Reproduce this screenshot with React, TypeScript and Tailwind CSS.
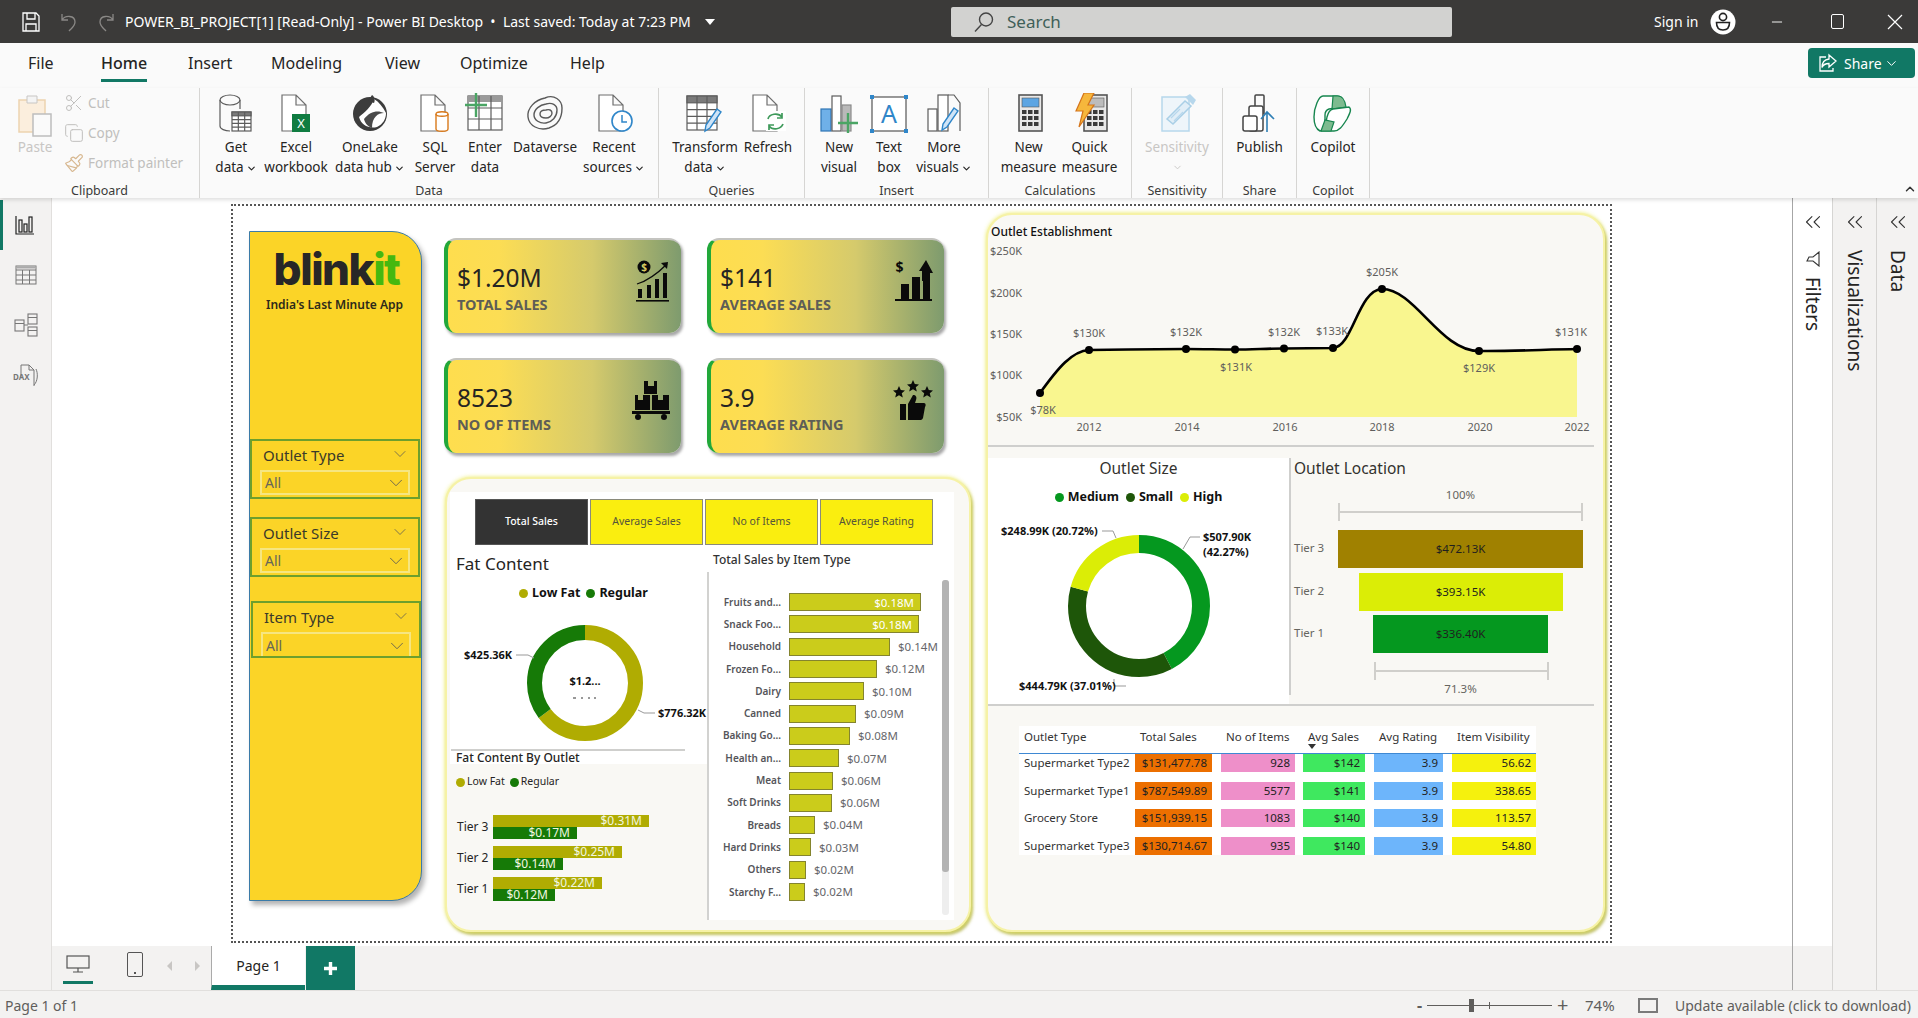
import React from 'react';
import { ChevronDown, ChevronUp, ChevronsLeft, Scissors, Copy, Paintbrush, Minus } from 'lucide-react';

// ---- title bar icons
const SaveIcon = () => (
  <svg width="18" height="20" viewBox="0 0 18 20" fill="none" stroke="#fff" strokeWidth="1.3">
    <path d="M1 1h13l3 3v15H1z" /><path d="M5 1v6h8V1M4 19v-7h10v7" />
  </svg>
);
const UndoIcon = ({ flip }: { flip?: boolean }) => (
  <svg width="18" height="20" viewBox="0 0 18 20" fill="none" stroke="#8a8886" strokeWidth="1.3" className={flip ? '-scale-x-100' : ''}>
    <path d="M2 2v6h6M2 8c3-5 13-5 13 2 0 4-3 6-6 9" />
  </svg>
);
const Avatar = () => (
  <svg width="26" height="26" viewBox="0 0 26 26">
    <circle cx="13" cy="13" r="12.5" fill="#fff" />
    <circle cx="13" cy="8" r="3.6" fill="none" stroke="#222" strokeWidth="1.6" />
    <path d="M6.5 13.5h13c0 5-2.5 7.5-6.5 7.5s-6.500-2.500-6.500-7.500z" fill="none" stroke="#222" strokeWidth="1.6" />
  </svg>
);

// ---- ribbon icons, all 40x40
const I = ({ children }: { children: React.ReactNode }) => (
  <svg width="40" height="40" viewBox="0 0 40 40" fill="none" stroke="#5c5c5c" strokeWidth="1.2">{children}</svg>
);
const Doc = ({ x = 8, w = 24 }: { x?: number; w?: number }) => (
  <path d={`M${x} 2h${w - 10}l10 10v26h-${w}z M${x + w - 10} 2v10h10`} stroke="#6e6e6e" fill="#fff" />
);
const MiniTable = ({ x, y, w, h }: { x: number; y: number; w: number; h: number }) => (
  <g stroke="#5c5c5c">
    <rect x={x} y={y} width={w} height={h} fill="#fff" />
    <rect x={x} y={y} width={w} height={h / 5} fill="#7a7a7a" />
    <path d={`M${x + w / 3} ${y}v${h}M${x + (2 * w) / 3} ${y}v${h}M${x} ${y + (2 * h) / 5}h${w}M${x} ${y + (3 * h) / 5}h${w}M${x} ${y + (4 * h) / 5}h${w}`} />
  </g>
);
const Pencil = ({ x, y }: { x: number; y: number }) => (
  <g transform={`translate(${x} ${y})`}>
    <path d="M12 0l4 3L5 19l-5 3 1-6z" fill="#cfe4f7" stroke="#2f86c9" strokeWidth="1.4" />
  </g>
);

const GetData = () => (
  <I><ellipse cx="14" cy="7" rx="10" ry="5" /><path d="M4 7v26c0 3 5 5 10 5" /><path d="M24 7v9" /><MiniTable x={16} y={19} w={19} h={19} /></I>
);
const Excel = () => (
  <I><Doc x={6} w={24} /><rect x="16" y="21" width="18" height="18" fill="#107c41" stroke="none" /><text x="25" y="35" textAnchor="middle" fontSize="13" fill="#fff" stroke="none">X</text></I>
);
const OneLake = () => (
  <I>
    <circle cx="20" cy="21" r="17" fill="#3c3c3c" stroke="none" />
    <path d="M24 6c-2 7-10 14-15 18 2 8 10 12 18 10 6-3 9-8 9-14-3-6-7-11-12-14z" fill="#fff" stroke="none" />
    <path d="M14 26c6-8 14-9 20-6-6 0-12 4-12 15-5-2-7-5-8-9z" fill="#4a4a4a" stroke="none" />
    <path d="M22 2c3 2 3 6 2 8l-6-2z" fill="#3c3c3c" stroke="none" />
  </I>
);
const Sql = () => (
  <I><Doc x={6} w={24} /><path d="M21 21c0-3 12-3 12 0v15c0 3-12 3-12 0z" fill="#fff" stroke="#d97a1c" strokeWidth="1.4" /><path d="M21 21c0 3 12 3 12 0" stroke="#d97a1c" strokeWidth="1.4" /></I>
);
const EnterData = () => (
  <I><rect x="3" y="3" width="34" height="34" fill="#fff" /><rect x="3" y="3" width="34" height="6" fill="#9a9a9a" stroke="none" /><path d="M14 3v34M26 3v34M3 15h34M3 26h34" /><path d="M11 0v24M0 12h22" stroke="#4aa564" strokeWidth="2.4" /></I>
);
const Dataverse = () => (
  <I><g stroke="#5a5a5a" strokeWidth="1.4"><path d="M20 5c9-4 17 2 17 10 0 9-4 17-13 20C14 38 4 33 3 24 2 15 10 7 20 5z" /><path d="M21 11c6-2 11 1 11 6 0 7-5 12-11 13-6 1-12-3-12-8 0-6 6-10 12-11z" /><path d="M21 17c3-1 6 0 6 3 0 3-3 5-6 5s-6-1-6-4 3-4 6-4z" /></g></I>
);
const Recent = () => (
  <I><Doc x={5} w={24} /><circle cx="28" cy="28" r="10" fill="#fff" stroke="#2f86c9" strokeWidth="1.6" /><path d="M28 22v7h5" stroke="#2f86c9" strokeWidth="1.5" /></I>
);
const Transform = () => (
  <I><MiniTable x={2} y={3} w={30} h={34} /><Pencil x={20} y={16} /></I>
);
const Refresh = () => (
  <I><Doc x={5} w={24} /><rect x="18" y="18" width="20" height="20" fill="#fff" stroke="none" /><path d="M20 26c1-5 10-7 14-2M34 20v5h-5M35 31c-2 5-10 7-14 2M21 37v-5h5" stroke="#3f9a5b" strokeWidth="1.7" /></I>
);
const NewVisual = () => (
  <I><rect x="2" y="16" width="10" height="22" fill="#6fb0e8" stroke="#2f76b5" /><rect x="13" y="3" width="9" height="35" fill="#fff" /><rect x="23" y="12" width="9" height="26" fill="#b9b9b9" stroke="#8a8a8a" /><path d="M29 20v20M19 30h20" stroke="#4aa564" strokeWidth="2.400" /></I>
);
const TextBox = () => (
  <I><rect x="3" y="4" width="34" height="34" fill="#fff" stroke="#555" /><g fill="#2f86c9" stroke="none"><rect x="1" y="2" width="4" height="4" /><rect x="35" y="2" width="4" height="4" /><rect x="1" y="36" width="4" height="4" /><rect x="35" y="36" width="4" height="4" /></g><text x="20" y="30" textAnchor="middle" fontSize="25" fill="#2f86c9" stroke="none">A</text></I>
);
const MoreVisuals = () => (
  <I><rect x="4" y="16" width="9" height="22" fill="#fff" /><rect x="14" y="2" width="10" height="36" fill="#fff" /><path d="M24 2h6l6 8v28" /><Pencil x={18} y={15} /></I>
);
const Calc = ({ top, x = 10 }: { top: string; x?: number }) => (
  <g transform={`translate(${x} 2)`}>
    <rect x="0" y="0" width="23" height="36" fill="#e8e8e8" stroke="#555" strokeWidth="1.6" />
    <rect x="3" y="3" width="17" height="9" fill={top} stroke="#555" strokeWidth="0.6" />
    {[14, 20, 26].map(yy => [3, 9, 15].map(xx => <rect key={`${xx}-${yy}`} x={xx} y={yy + 1} width="4.500" height="4" fill="#3a3a3a" stroke="none" />))}
  </g>
);
const NewMeasure = () => (<I><Calc top="#5ca5e3" /></I>);
const QuickMeasure = () => (
  <I><Calc top="#bcbcbc" x={14} /><path d="M14 0h10l-6 12h6L9 34l4-16H6z" fill="#f6b73c" stroke="#d4741b" strokeWidth="1.2" /></I>
);
const SensitivityIcon = () => (
  <I><rect x="5" y="4" width="27" height="34" fill="#eef5fa" stroke="#b7d7ec" strokeWidth="1.5" /><path d="M10 26L28 8l6 5-18 18z" fill="#e1eef7" stroke="#a9cfe6" strokeWidth="1.500" /><path d="M28 4l5-3 6 6-3 5z" fill="#b7d7ec" stroke="none" /><path d="M14 25l9-9M17 28l9-9" stroke="#b7d7ec" /></I>
);
const Publish = () => (
  <I><path d="M15 14V3c0-1 1-1 1-1h7c1 0 1 1 1 1v18" stroke="#444" strokeWidth="1.500" /><rect x="9" y="13" width="14" height="25" rx="2" fill="#fff" stroke="#444" strokeWidth="1.500" /><rect x="3" y="23" width="14" height="15" rx="2" fill="#fff" stroke="#444" strokeWidth="1.500" /><path d="M27 39V20M21 26l6-7 7 7" stroke="#2f7fb5" strokeWidth="1.600" /></I>
);
const Copilot = () => (
  <I>
    <path d="M10 3h14c4 0 6 2 6 7v4l-14 2c-3 1-4 3-4 6v8c0 3-2 8-5 8C3 36 1 30 1 24 1 14 6 3 10 3z" fill="#fff" stroke="#17864f" strokeWidth="1.4" />
    <path d="M20 3h5c4 0 7 4 8 11l-14 2z" fill="#7dbb8f" stroke="#17864f" />
    <path d="M8 38h13c5 0 8-4 13-12 3-6 5-10 2-12l-16 2c-4 1-5 4-6 8-1 6-2 12-6 14z" fill="#fff" stroke="#17864f" strokeWidth="1.400" />
    <path d="M8 38h10l3-9-9-2z" fill="#7dbb8f" stroke="#17864f" />
  </I>
);

const RibbonBtn = ({ w, icon, l1, l2, caret, muted }: { w: string; icon?: React.ReactNode; l1: string; l2?: string; caret?: boolean; muted?: boolean }) => (
  <div className={`${w} shrink-0 flex flex-col items-center ${muted ? 'text-[#c8c6c4]' : 'text-[#252423]'}`}>
    <div className="h-[49px] pt-[5px] flex justify-center">{icon}</div>
    <div className="h-[20px] leading-[20px] whitespace-nowrap">{l1}</div>
    <div className="h-[20px] leading-[20px] whitespace-nowrap flex items-center">
      {l2}
      {caret && <ChevronDown size={11} strokeWidth={2.5} className="ml-[2px] mt-[2px]" />}
    </div>
  </div>
);

const RibbonGroup = ({ w, label, pl, children }: { w: string; label: string; pl?: string; children: React.ReactNode }) => (
  <div className={`${w} shrink-0 h-[110px] border-r border-[#d6d5d3] flex flex-col`}>
    <div className={`flex h-[93px] ${pl ?? ''}`}>{children}</div>
    <div className="text-center text-[12.5px] leading-[14px] pt-[3px] text-[#3b3a39]">{label}</div>
  </div>
);

const Ribbon = () => (
  <div className="h-[110px] flex text-[13.5px] bg-[#fafafa] shadow-[0_2px_4px_rgba(0,0,0,0.13)] relative z-10 shrink-0">
    <RibbonGroup w="w-[200px]" label="Clipboard">
      <div className="w-[62px] flex flex-col items-center text-[#c8c6c4] pl-[8px]">
        <svg width="38" height="44" viewBox="0 0 38 44" fill="none" className="mt-[6px]">
          <path d="M3 6h26v32H3z" fill="#fbeedd" stroke="#edd3b0" strokeWidth="1.500" />
          <path d="M11 2h10v7H11z" fill="#f4f4f4" stroke="#c8c6c4" />
          <rect x="17" y="20" width="18" height="22" fill="#fafafa" stroke="#bdbdbd" strokeWidth="1.500" />
        </svg>
        <span className="leading-[20px] -mt-[1px]">Paste</span>
      </div>
      <div className="flex flex-col text-[#c0bfbd] pl-[2px] pt-[5px] gap-[10px]">
        {[
          { t: 'Cut', ic: <Scissors size={20} strokeWidth={1.2} /> },
          { t: 'Copy', ic: <Copy size={20} strokeWidth={1.2} /> },
          { t: 'Format painter', ic: <Paintbrush size={20} strokeWidth={1.400} color="#d7b78f" /> },
        ].map(c => (
          <div key={c.t} className="h-[20px] flex items-center gap-[4px] whitespace-nowrap">{c.ic}{c.t}</div>
        ))}
      </div>
    </RibbonGroup>
    <RibbonGroup w="w-[459px]" label="Data" pl="pl-[6px]">
      <RibbonBtn w="w-[60px]" icon={<GetData />} l1="Get" l2="data" caret />
      <RibbonBtn w="w-[60px]" icon={<Excel />} l1="Excel" l2="workbook" />
      <RibbonBtn w="w-[88px]" icon={<OneLake />} l1="OneLake" l2="data hub" caret />
      <RibbonBtn w="w-[42px]" icon={<Sql />} l1="SQL" l2="Server" />
      <RibbonBtn w="w-[58px]" icon={<EnterData />} l1="Enter" l2="data" />
      <RibbonBtn w="w-[62px]" icon={<Dataverse />} l1="Dataverse" />
      <RibbonBtn w="w-[76px]" icon={<Recent />} l1="Recent" l2="sources" caret />
    </RibbonGroup>
    <RibbonGroup w="w-[146px]" label="Queries" pl="pl-[10px]">
      <RibbonBtn w="w-[72px]" icon={<Transform />} l1="Transform" l2="data" caret />
      <RibbonBtn w="w-[54px]" icon={<Refresh />} l1="Refresh" />
    </RibbonGroup>
    <RibbonGroup w="w-[184px]" label="Insert" pl="pl-[8px]">
      <RibbonBtn w="w-[52px]" icon={<NewVisual />} l1="New" l2="visual" />
      <RibbonBtn w="w-[48px]" icon={<TextBox />} l1="Text" l2="box" />
      <RibbonBtn w="w-[62px]" icon={<MoreVisuals />} l1="More" l2="visuals" caret />
    </RibbonGroup>
    <RibbonGroup w="w-[143px]" label="Calculations" pl="pl-[9px]">
      <RibbonBtn w="w-[61px]" icon={<NewMeasure />} l1="New" l2="measure" />
      <RibbonBtn w="w-[61px]" icon={<QuickMeasure />} l1="Quick" l2="measure" />
    </RibbonGroup>
    <RibbonGroup w="w-[91px]" label="Sensitivity">
      <div className="w-[90px] flex flex-col items-center text-[#c8c6c4]">
        <div className="h-[49px] pt-[5px]"><SensitivityIcon /></div>
        <div className="h-[20px] leading-[20px]">Sensitivity</div>
        <ChevronDown size={11} strokeWidth={2} className="mt-[5px]" />
      </div>
    </RibbonGroup>
    <RibbonGroup w="w-[74px]" label="Share">
      <RibbonBtn w="w-[73px]" icon={<Publish />} l1="Publish" />
    </RibbonGroup>
    <RibbonGroup w="w-[73px]" label="Copilot">
      <RibbonBtn w="w-[72px]" icon={<Copilot />} l1="Copilot" />
    </RibbonGroup>
    <div className="flex-1 flex justify-end items-end pr-[1px] pb-[2px]">
      <ChevronUp size={14} strokeWidth={2.5} color="#333" />
    </div>
  </div>
);

const TopBar = () => (
  <div className="h-[43px] bg-[#3b3a39] flex items-center text-white shrink-0">
    <div className="ml-[22px] w-[38px]"><SaveIcon /></div>
    <div className="w-[37px]"><UndoIcon /></div>
    <div className="w-[28px]"><UndoIcon flip /></div>
    <div className="text-[14px] whitespace-pre w-[580px]">POWER_BI_PROJECT[1] [Read-Only] - Power BI Desktop  •  Last saved: Today at 7:23 PM</div>
    <div className="w-0 h-0 border-x-[5px] border-x-transparent border-t-[6px] border-t-white" />
    <div className="ml-[236px] w-[501px] h-[30px] bg-[#d2d2d0] rounded-[2px] flex items-center pl-[22px] text-[#3f5f58]">
      <svg width="22" height="22" viewBox="0 0 22 22" fill="none" stroke="#444" strokeWidth="1.400"><circle cx="13" cy="8.500" r="6.500" /><path d="M8.500 13.500L2 20.500" /></svg>
      <span className="ml-[12px] text-[17px]">Search</span>
    </div>
    <span className="ml-[202px] text-[14px]">Sign in</span>
    <div className="ml-[12px]"><Avatar /></div>
    <Minus size={16} strokeWidth={1.4} className="ml-[33px]" />
    <div className="ml-[46px] w-[13px] h-[15px] border-[1.5px] border-white rounded-[2px]" />
    <svg width="16" height="16" viewBox="0 0 16 16" stroke="#fff" strokeWidth="1.200" className="ml-[43px]"><path d="M1 1l14 14M15 1L1 15" /></svg>
  </div>
);

const Tabs = () => (
  <div className="h-[45px] bg-[#fafafa] flex items-start text-[16px] text-[#252423] shrink-0 relative">
    {[
      { t: 'File', w: 'w-[101px]', pl: 'pl-[28px]' },
      { t: 'Home', w: 'w-[87px]', pl: 'pl-0', on: true },
      { t: 'Insert', w: 'w-[83px]', pl: 'pl-0' },
      { t: 'Modeling', w: 'w-[114px]', pl: 'pl-0' },
      { t: 'View', w: 'w-[75px]', pl: 'pl-0' },
      { t: 'Optimize', w: 'w-[110px]', pl: 'pl-0' },
      { t: 'Help', w: 'w-[60px]', pl: 'pl-0' },
    ].map(x => (
      <div key={x.t} className={`${x.w} ${x.pl} pt-[8px]`}>
        <span className={`inline-block h-[30px] leading-[22px] ${x.on ? 'font-medium border-b-[3px] border-[#117865]' : ''}`}>{x.t}</span>
      </div>
    ))}
    <div className="absolute right-[3px] top-[5px] w-[107px] h-[30px] rounded-[4px] bg-[#117865] flex items-center text-white text-[14px] pl-[10px]">
      <svg width="20" height="20" viewBox="0 0 20 20" fill="none" stroke="#fff" strokeWidth="1.300"><path d="M11 2l7 6-7 6v-3.500c-4 0-6 1.500-7 4 0-5 3-8 7-8.500z" /><path d="M8 4H2v14h13v-3" /></svg>
      <span className="ml-[6px]">Share</span>
      <ChevronDown size={15} className="ml-[2px]" strokeWidth={1.600} />
    </div>
  </div>
);

const LeftRail = () => (
  <div className="w-[52px] shrink-0 bg-[#f3f2f1] border-r border-[#e1dfdd] flex flex-col relative pt-[2px]">
    <div className="h-[50px] border-l-[3px] border-[#117865] flex items-center justify-center pr-[4px]">
      <svg width="20" height="20" viewBox="0 0 20 20" fill="none" stroke="#222" strokeWidth="1.200"><path d="M1 1v18h18" /><rect x="4" y="5" width="3" height="12" /><rect x="9" y="9" width="3" height="8" /><rect x="14" y="2" width="3" height="15" /></svg>
    </div>
    <div className="h-[50px] flex items-center justify-center">
      <svg width="22" height="20" viewBox="0 0 22 20" fill="none" stroke="#777" strokeWidth="1"><rect x="1" y="1" width="20" height="18" /><path d="M1 5h20M1 10h20M1 15h20M7.500 5v14M14.500 5v14" /><path d="M1 2.500h20" strokeWidth="2" stroke="#aaa" /></svg>
    </div>
    <div className="h-[50px] flex items-center justify-center">
      <svg width="24" height="24" viewBox="0 0 24 24" fill="none" stroke="#777" strokeWidth="1.100"><rect x="1" y="7" width="9" height="11" /><rect x="14" y="1" width="9" height="10" /><rect x="14" y="14" width="9" height="9" /><path d="M1 10.500h9M14 4.500h9M14 17.500h9M10 12h4" /></svg>
    </div>
    <div className="h-[50px] relative flex items-center justify-center">
      <svg width="24" height="24" viewBox="0 0 24 24" fill="none" stroke="#777" strokeWidth="1" className="ml-[2px]"><path d="M6 14V2h8l5 5v16" /><path d="M14 2v5h5M21 6c2 4 2 12-2 16" /></svg>
      <span className="absolute left-[13px] top-[23px] text-[8px] font-bold text-[#777] leading-[8px]">DAX</span>
    </div>
  </div>
);

// ---- report: sidebar
const Slicer = ({ title, cut, cls }: { title: string; cut?: boolean; cls: string }) => (
  <div className={`${cls} w-[170px] border-2 border-[#6d9f2d] shrink-0 overflow-hidden`}>
    <div className="flex items-center justify-between h-[29px] pl-[11px] pr-[8px] text-[15px] text-[#3a3a2a]">
      {title}
      <ChevronDown size={20} strokeWidth={0.9} color="#555" className="-mt-[4px]" />
    </div>
    <div className={`ml-[8px] w-[150px] h-[25px] border-2 border-[#f6e681] flex items-center justify-between pl-[3px] pr-[1px] text-[14px] text-[#66665a] ${cut ? 'border-b-0' : ''}`}>
      All
      <ChevronDown size={22} strokeWidth={0.9} color="#555" />
    </div>
  </div>
);

const Sidebar = () => (
  <div className="ml-[16px] mt-[25px] w-[173px] h-[670px] shrink-0 bg-[#fbd427] border border-[#3b7ba8] rounded-r-[30px] shadow-[3px_4px_5px_rgba(0,0,0,0.3)] flex flex-col">
    <div className="h-[207px] shrink-0 text-center pt-[10px]">
      <div className="text-[44px] leading-[54px] font-extrabold tracking-[-1.5px] text-[#272727] font-['Inter',sans-serif] pl-[2px]">
        blink<span className="text-[#46b80f]">it</span>
      </div>
      <div className="text-[12px] leading-[18px] font-semibold text-[#2d2a1a] -ml-[2px]">India's Last Minute App</div>
    </div>
    <Slicer title="Outlet Type" cls="h-[60px]" />
    <Slicer title="Outlet Size" cls="h-[60px] mt-[18px]" />
    <Slicer title="Item Type" cut cls="h-[57px] mt-[24px] ml-[1px]" />
  </div>
);

// ---- report: KPI cards
const GrowthIcon = () => (
  <svg width="34" height="42" viewBox="0 0 34 42" fill="#0a0a0a">
    <rect x="2" y="29" width="4" height="9" /><rect x="11" y="25" width="4" height="13" /><rect x="19" y="19" width="4" height="19" /><rect x="27" y="13" width="4" height="25" /><rect x="0" y="40" width="33" height="1.600" />
    <path d="M1 24c10-3 21-11 30-20" fill="none" stroke="#0a0a0a" strokeWidth="1.300" /><path d="M25 3l7-1-1 7z" />
    <circle cx="8" cy="7" r="6.500" /><text x="8" y="10.500" textAnchor="middle" fontSize="10" fontWeight="700" fill="#d8cb63">$</text>
  </svg>
);
const UpBarsIcon = () => (
  <svg width="38" height="42" viewBox="0 0 38 42" fill="#0a0a0a">
    <rect x="6" y="24" width="8" height="15" /><rect x="17" y="17" width="8" height="22" /><rect x="28" y="10" width="7" height="29" /><path d="M24 11L31 0l7 13h-4v8h-7v-10z" /><rect x="0" y="39" width="37" height="2" />
    <text x="4.500" y="12" textAnchor="middle" fontSize="14" fontWeight="700">$</text>
  </svg>
);
const BoxesIcon = () => (
  <svg width="38" height="42" viewBox="0 0 38 42" fill="#0a0a0a">
    <path d="M12 1h4v5h6V1h3v13H12zM3 15h3v5h5v-5h7v15H3zM20 15h6v5h5v-5h6v15H20z" />
    <path d="M0 31h38v3H0z" /><circle cx="6" cy="37" r="3" /><circle cx="32" cy="37" r="3" />
  </svg>
);
const Star = ({ x, y, s }: { x: number; y: number; s: number }) => (
  <path transform={`translate(${x} ${y}) scale(${s})`} d="M6 0l1.800 4 4.200.4-3.200 2.800 1 4.200L6 9.200 2.200 11.400l1-4.200L0 4.400 4.200 4z" />
);
const RatingIcon = () => (
  <svg width="40" height="42" viewBox="0 0 40 42" fill="#0a0a0a">
    <Star x={0} y={6} s={1} /><Star x={14} y={0} s={1} /><Star x={28} y={6} s={1} />
    <rect x="7" y="24" width="6" height="16" /><path d="M15 24l5-9c3 0 4 2 3 5l-1 3h9c2 0 2 3 1 4l-2 11c-1 2-2 2-3 2H15z" />
  </svg>
);

const Kpi = ({ v, l, icon }: { v: string; l: string; icon: React.ReactNode }) => (
  <div className="w-[237px] h-[95px] rounded-[12px] border-l-[4px] border-l-[#22a83a] border-t-2 border-t-[#c4c4c0] bg-[linear-gradient(90deg,#fedd4e_0%,#fcdd54_22%,#d5ca6c_62%,#7e9b6e_100%)] shadow-[2px_3px_3px_rgba(0,0,0,0.35)] flex items-center justify-between pl-[9px] pr-[11px]">
    <div className="flex flex-col pt-[1px]">
      <span className="text-[24.5px] leading-[34px] text-[#252423]">{v}</span>
      <span className="text-[14.5px] leading-[20px] font-bold text-[#5e5e56] -mt-[1px]">{l}</span>
    </div>
    <div className="-mt-[12px]">{icon}</div>
  </div>
);

// ---- report: middle panel
const ItemBars = [
  { l: 'Fruits and...', w: 'w-[132px]', v: '$0.18M', inside: true },
  { l: 'Snack Foo...', w: 'w-[130px]', v: '$0.18M', inside: true },
  { l: 'Household', w: 'w-[101px]', v: '$0.14M' },
  { l: 'Frozen Fo...', w: 'w-[88px]', v: '$0.12M' },
  { l: 'Dairy', w: 'w-[75px]', v: '$0.10M' },
  { l: 'Canned', w: 'w-[67px]', v: '$0.09M' },
  { l: 'Baking Go...', w: 'w-[61px]', v: '$0.08M' },
  { l: 'Health an...', w: 'w-[50px]', v: '$0.07M' },
  { l: 'Meat', w: 'w-[44px]', v: '$0.06M' },
  { l: 'Soft Drinks', w: 'w-[43px]', v: '$0.06M' },
  { l: 'Breads', w: 'w-[26px]', v: '$0.04M' },
  { l: 'Hard Drinks', w: 'w-[22px]', v: '$0.03M' },
  { l: 'Others', w: 'w-[17px]', v: '$0.02M' },
  { l: 'Starchy F...', w: 'w-[16px]', v: '$0.02M' },
];

const TierBars = [
  { t: 'Tier 3', a: 'w-[156px]', av: '$0.31M', b: 'w-[84px]', bv: '$0.17M' },
  { t: 'Tier 2', a: 'w-[129px]', av: '$0.25M', b: 'w-[70px]', bv: '$0.14M' },
  { t: 'Tier 1', a: 'w-[109px]', av: '$0.22M', b: 'w-[62px]', bv: '$0.12M' },
];

const Dot = ({ c, s = 'w-[9px] h-[9px]' }: { c: string; s?: string }) => <span className={`inline-block rounded-full ${c} ${s}`} />;

const TabBtn = ({ t, on }: { t: string; on?: boolean }) => (
  <div className={`w-[113px] h-[46px] flex items-center justify-center text-[10.5px] border ${on ? 'bg-[#333333] text-white border-[#555] font-medium' : 'bg-[#faee0f] text-[#55553a] border-[#8a8a7a]'}`}>{t}</div>
);

const FatDonut = () => {
  const r = 50.5, c = 2 * Math.PI * r, low = 776.32 / (776.32 + 425.36);
  return (
    <svg width="257" height="139" viewBox="450 610 257 139" className="block relative z-10 overflow-visible">
      <g transform="rotate(-90 585 683)" fill="none" strokeWidth="15">
        <circle cx="585" cy="683" r={r} stroke="#b0ac02" strokeDasharray={`${c * low} ${c}`} />
        <circle cx="585" cy="683" r={r} stroke="#167a07" strokeDasharray={`${c * (1 - low)} ${c}`} strokeDashoffset={-c * low} />
      </g>
      <path d="M516 655h12l6 3M638 710l6 3h11" fill="none" stroke="#999" />
      <g fontSize="11" fontWeight="700" fill="#111">
        <text x="464" y="659">$425.36K</text>
        <text x="658" y="717">$776.32K</text>
        <text x="585" y="685" textAnchor="middle">$1.2...</text>
      </g>
      <path d="M573 698h3M581 698h2M588 698h2M594 698h2" stroke="#333" />
    </svg>
  );
};

const MiddlePanel = () => (
  <div className="mt-[24px] ml-[1px] w-[526px] h-[455px] rounded-[26px] bg-[#f9f8f4] border-2 border-[#f6f2a6] shadow-[0_0_4px_rgba(235,235,90,0.9),2px_3px_3px_rgba(170,170,60,0.75)] pt-[13px] pl-[3px]">
    <div className="w-[504px] bg-white h-[60px] flex gap-[2px] pl-[25px] pt-[7px]">
      <TabBtn t="Total Sales" on />
      <TabBtn t="Average Sales" />
      <TabBtn t="No of Items" />
      <TabBtn t="Average Rating" />
    </div>
    <div className="flex">
      <div className="w-[257px] shrink-0">
        <div className="bg-white">
          <div className="h-[24px] pl-[6px] text-[17px] leading-[24px] text-[#252423]">Fat Content</div>
          <div className="h-[34px] flex items-center justify-center gap-[4px] pl-[10px] text-[12.5px] font-bold text-[#111]">
            <Dot c="bg-[#b0ac02]" />Low Fat<Dot c="bg-[#167a07] ml-[2px]" />Regular
          </div>
          <FatDonut />
          <div className="h-[2px] w-[234px] ml-[1px] bg-[#cfcfcd]" />
          <div className="h-[13px] pl-[6px] text-[12px] leading-[14px] font-medium text-[#252423]">Fat Content By Outlet</div>
        </div>
        <div className="h-[34px] flex items-center pl-[6px] text-[10.5px] text-[#252423] pt-[2px]">
          <Dot c="bg-[#b0ac02]" s="w-[9px] h-[9px] mr-[2px]" />Low Fat<Dot c="bg-[#167a07]" s="w-[9px] h-[9px] ml-[5px] mr-[2px]" />Regular
        </div>
        <div className="mt-[17px] flex flex-col gap-[7px]">
          {TierBars.map(t => (
            <div key={t.t} className="flex items-center h-[24px]">
              <div className="w-[43px] pl-[7px] text-[12px] text-[#252423]">{t.t}</div>
              <div className="flex flex-col text-[12px] text-[#f2f7e0]">
                <div className={`${t.a} h-[12px] bg-[#b0ac02] flex items-center justify-end pr-[7px]`}>{t.av}</div>
                <div className={`${t.b} h-[12px] bg-[#167a07] flex items-center justify-end pr-[7px]`}>{t.bv}</div>
              </div>
            </div>
          ))}
        </div>
      </div>
      <div className="w-[247px]">
        <div className="bg-white h-[20px] pl-[6px] text-[12px] leading-[16px] font-medium text-[#333]">Total Sales by Item Type</div>
        <div className="relative bg-white h-[348px] pt-[19px] border-l-2 border-[#d2d2d0]">
          {ItemBars.map(b => (
            <div key={b.l} className="h-[22.3px] flex items-center">
              <div className="w-[72px] shrink-0 text-right text-[10px] font-semibold text-[#55555a] whitespace-nowrap">{b.l}</div>
              <div className={`${b.w} ml-[8px] h-[18px] bg-[#cbcc1b] border-[1.5px] border-[#84842e] flex items-center justify-end pr-[6px] text-[11.5px] text-white`}>{b.inside && b.v}</div>
              {!b.inside && <span className="ml-[8px] text-[11.5px] text-[#66666a]">{b.v}</span>}
            </div>
          ))}
          <div className="absolute left-[233px] top-[8px] w-[7px] h-[335px] rounded-[3px] bg-[#eeeeee]">
            <div className="h-[292px] rounded-[3px] bg-[#b3b3b3]" />
          </div>
        </div>
      </div>
    </div>
  </div>
);

// ---- report: right panel
const LineChart = () => {
  const line = 'M1040 393C1058 368 1072 351 1089 350C1120 349.500 1160 349 1186 349C1205 349 1218 349.500 1235 349.500C1252 349.500 1268 348.500 1284 348.500L1333 348C1353 347 1358 290 1382 289C1415 289 1440 351 1479 351C1510 351.500 1545 349.500 1577 349';
  const pts: [number, number][] = [[1040, 393], [1089, 350], [1186, 349], [1235, 349.500], [1284, 348.500], [1333, 348], [1382, 289], [1479, 351], [1577, 349]];
  return (
    <svg width="617" height="204" viewBox="988 241 617 204" className="block">
      <path d={`${line}L1577 417L1040 417Z`} fill="#f9f68f" />
      <path d={line} fill="none" stroke="#000" strokeWidth="2.600" />
      {pts.map(p => <circle key={p[0]} cx={p[0]} cy={p[1]} r="4" fill="#000" />)}
      <g fontSize="11" fill="#605e5c" textAnchor="end">
        <text x="1022" y="255">$250K</text><text x="1022" y="297">$200K</text><text x="1022" y="338">$150K</text><text x="1022" y="379">$100K</text><text x="1022" y="421">$50K</text>
      </g>
      <g fontSize="11" fill="#605e5c" textAnchor="middle">
        {[[1089, 2012], [1187, 2014], [1285, 2016], [1382, 2018], [1480, 2020], [1577, 2022]].map(y => <text key={y[1]} x={y[0]} y="431">{y[1]}</text>)}
        <text x="1043" y="414">$78K</text><text x="1089" y="337">$130K</text><text x="1186" y="336">$132K</text><text x="1236" y="371">$131K</text><text x="1284" y="336">$132K</text><text x="1332" y="335">$133K</text><text x="1382" y="276">$205K</text><text x="1479" y="372">$129K</text><text x="1571" y="336">$131K</text>
      </g>
    </svg>
  );
};

const SizeDonut = () => {
  const r = 62, c = 2 * Math.PI * r;
  const seg = [
    { p: 0.4227, col: '#05981f', at: 0 },
    { p: 0.3701, col: '#1e5609', at: 0.4227 },
    { p: 0.2072, col: '#dbed06', at: 0.7928 },
  ];
  return (
    <svg width="301" height="188" viewBox="988 516 301 188" className="block">
      <g transform="rotate(-90 1139 606)" fill="none" strokeWidth="18">
        {seg.map(s => <circle key={s.col} cx="1139" cy="606" r={r} stroke={s.col} strokeDasharray={`${c * s.p} ${c}`} strokeDashoffset={-c * s.at} />)}
      </g>
      <path d="M1102 531h11l3 7M1183 549l7-12h10M1126 686h-12v-7" fill="none" stroke="#999" />
      <g fontSize="11" fontWeight="700" fill="#111">
        <text x="1001" y="535">$248.99K (20.72%)</text>
        <text x="1203" y="541">$507.90K</text>
        <text x="1203" y="556">(42.27%)</text>
        <text x="1019" y="690">$444.79K (37.01%)</text>
      </g>
    </svg>
  );
};

const Bracket = ({ w }: { w: string }) => (
  <div className={`${w} h-[18px] border-x-2 border-[#d0cfcb] flex items-center`}><div className="w-full h-[2px] bg-[#d0cfcb]" /></div>
);

const Funnel = () => (
  <div className="flex-1 text-[11.5px] text-[#66655f]">
    <div className="h-[20px] pl-[3px] text-[15.5px] leading-[20px] text-[#33322e]">Outlet Location</div>
    <div className="ml-[47px] w-[245px] text-center h-[16px] mt-[9px] leading-[16px]">100%</div>
    <div className="ml-[47px]"><Bracket w="w-[245px]" /></div>
    <div className="mt-[9px] flex flex-col gap-[4.500px]">
      {[
        { t: 'Tier 3', w: 'w-[245px]', bg: 'bg-[#a08100]', v: '$472.13K' },
        { t: 'Tier 2', w: 'w-[204px]', bg: 'bg-[#dbed06]', v: '$393.15K' },
        { t: 'Tier 1', w: 'w-[175px]', bg: 'bg-[#05981f]', v: '$336.40K' },
      ].map(r => (
        <div key={r.t} className="flex items-center">
          <div className="w-[47px] pl-[3px] -mt-[2px]">{r.t}</div>
          <div className="w-[245px] flex justify-center">
            <div className={`${r.w} h-[38px] ${r.bg} flex items-center justify-center text-[#1f1f1f]`}>{r.v}</div>
          </div>
        </div>
      ))}
    </div>
    <div className="mt-[9px] ml-[83px]"><Bracket w="w-[175px]" /></div>
    <div className="ml-[47px] w-[245px] text-center leading-[16px] mt-[1px]">71.3%</div>
  </div>
);

const cols = [
  { h: 'Total Sales', box: 'w-[77px] mr-[9px]', bg: 'bg-[#ec6f00]', tw: 'w-[86px]' },
  { h: 'No of Items', box: 'w-[74px] mr-[8px]', bg: 'bg-[#ee8fc9]', tw: 'w-[82px]' },
  { h: 'Avg Sales', box: 'w-[62px] mr-[9px]', bg: 'bg-[#3fe85f]', tw: 'w-[71px]' },
  { h: 'Avg Rating', box: 'w-[69px] mr-[9px]', bg: 'bg-[#6db5fb]', tw: 'w-[78px]' },
  { h: 'Item Visibility', box: 'w-[84px]', bg: 'bg-[#f5f10d]', tw: 'w-[84px]' },
];
const rows = [
  ['Supermarket Type2', '$131,477.78', '928', '$142', '3.9', '56.62'],
  ['Supermarket Type1', '$787,549.89', '5577', '$141', '3.9', '338.65'],
  ['Grocery Store', '$151,939.15', '1083', '$140', '3.9', '113.57'],
  ['Supermarket Type3', '$130,714.67', '935', '$140', '3.9', '54.80'],
];

const OutletTable = () => (
  <div className="ml-[31px] mt-[20px] w-[517px] bg-white text-[11.5px] text-[#333]">
    <div className="flex h-[28px] border-b border-[#3e88d3] items-start pt-[2px] leading-[18px]">
      <div className="w-[116px] pl-[5px]">Outlet Type</div>
      {cols.map(c => (
        <div key={c.h} className={`${c.tw} pl-[5px] relative whitespace-nowrap`}>
          {c.h}
          {c.h === 'Avg Sales' && <span className="absolute left-[5px] top-[16px] w-0 h-0 border-x-[4px] border-x-transparent border-t-[5px] border-t-[#333]" />}
        </div>
      ))}
    </div>
    {rows.map(r => (
      <div key={r[0]} className="flex h-[27.5px] last:h-[18px]">
        <div className="w-[116px] pl-[5px] h-[18px] leading-[18px] whitespace-nowrap">{r[0]}</div>
        {cols.map((c, i) => (
          <div key={c.h} className={`${c.box} ${c.bg} h-[18px] leading-[18px] text-right pr-[5px] text-[#222]`}>{r[i + 1]}</div>
        ))}
      </div>
    ))}
  </div>
);

const RightPanel = () => (
  <div className="ml-[14px] mt-[7px] w-[619px] h-[719px] shrink-0 rounded-[26px] bg-[#f9f8f4] border-2 border-[#f6f2a6] shadow-[0_0_4px_rgba(235,235,90,0.9),2px_3px_3px_rgba(170,170,60,0.75)]">
    <div className="h-[26px] flex items-end pl-[3px] text-[12px] leading-[18px] font-medium text-[#111]">Outlet Establishment</div>
    <LineChart />
    <div className="w-[606px] h-[2px] bg-[#cfcfcd]" />
    <div className="h-[11px]" />
    <div className="flex h-[246px]">
      <div className="w-[301px] bg-white shrink-0">
        <div className="h-[20px] text-center text-[15.5px] leading-[20px] text-[#33322e]">Outlet Size</div>
        <div className="h-[38px] flex items-center justify-center gap-[4px] text-[12.5px] font-bold text-[#111]">
          <Dot c="bg-[#05981f]" />Medium<Dot c="bg-[#1e5609] ml-[3px]" />Small<Dot c="bg-[#dbed06] ml-[3px]" />High
        </div>
        <SizeDonut />
      </div>
      <div className="w-[2px] h-[237px] bg-[#cfcfcd] shrink-0" />
      <Funnel />
    </div>
    <div className="w-[606px] h-[2px] bg-[#cfcfcd]" />
    <OutletTable />
  </div>
);

const Report = () => (
  <div className="flex-1 bg-white pl-[179px] pt-[6px] min-w-0">
    <div className="w-[1381px] h-[739px] border-2 border-dotted border-[#555] flex items-start">
      <Sidebar />
      <div className="ml-[22px] mt-[32px] w-[528px] shrink-0">
        <div className="grid grid-cols-[238px_238px] gap-x-[25px] gap-y-[25px]">
          <Kpi v="$1.20M" l="TOTAL SALES" icon={<GrowthIcon />} />
          <Kpi v="$141" l="AVERAGE SALES" icon={<UpBarsIcon />} />
          <Kpi v="8523" l="NO OF ITEMS" icon={<BoxesIcon />} />
          <Kpi v="3.9" l="AVERAGE RATING" icon={<RatingIcon />} />
        </div>
        <MiddlePanel />
      </div>
      <RightPanel />
    </div>
  </div>
);

const SidePane = ({ w, title }: { w: string; title: string }) => (
  <div className={`${w} bg-[#f3f2f1] shrink-0 border-l border-[#d6d5d3] flex flex-col items-center pt-[11px]`}>
    <ChevronsLeft size={26} strokeWidth={1} color="#333" />
    <div className="mt-[15px] text-[19px] leading-[24px] text-[#252423] [writing-mode:vertical-rl]">{title}</div>
  </div>
);

const PageBar = () => (
  <div className="h-[44px] bg-[#f3f2f1] flex items-stretch shrink-0">
    <div className="w-[11px]" />
    <div className="w-[30px] flex flex-col items-center pt-[9px] h-[38px] border-b-[3px] border-[#117865]">
      <svg width="24" height="18" viewBox="0 0 24 18" fill="none" stroke="#555" strokeWidth="1.200"><rect x="1" y="1" width="22" height="12" /><path d="M12 13v4M7 17h10" /></svg>
    </div>
    <div className="w-[34px]" />
    <div className="w-[16px] pt-[6px]">
      <div className="w-[16px] h-[25px] rounded-[2px] border-[1.400px] border-[#555] relative"><span className="absolute left-[6px] bottom-[2px] w-[2px] h-[2px] bg-[#555]" /></div>
    </div>
    <div className="w-[29px] flex items-center justify-end pb-[4px]"><span className="w-0 h-0 border-y-[5px] border-y-transparent border-r-[5px] border-r-[#c8c6c4]" /></div>
    <div className="w-[28px] flex items-center justify-end pb-[4px]"><span className="w-0 h-0 border-y-[5px] border-y-transparent border-l-[5px] border-l-[#c8c6c4]" /></div>
    <div className="w-[11px]" />
    <div className="w-[94px] bg-white border-l border-[#aaa] border-b-[5px] border-b-[#117865] flex items-center justify-center text-[14px] text-[#252423]">Page 1</div>
    <div className="w-[49px] ml-[1px] bg-[#117865] flex items-center justify-center">
      <svg width="15" height="15" viewBox="0 0 15 15" stroke="#fff" strokeWidth="3.400"><path d="M7.500 1v13M1 7.500h13" /></svg>
    </div>
  </div>
);

const StatusBar = () => (
  <div className="h-[28px] bg-[#f3f2f1] border-t border-[#e1dfdd] flex items-center text-[14px] text-[#605e5c] shrink-0 pt-[1px]">
    <span className="ml-[5px] w-[1412px]">Page 1 of 1</span>
    <span className="w-[10px] font-bold text-[16px]">-</span>
    <div className="relative w-[125px] h-[1px] bg-[#605e5c]">
      <span className="absolute left-[42px] -top-[6px] w-[5px] h-[13px] bg-[#605e5c]" />
      <span className="absolute left-[62px] -top-[3px] w-[1px] h-[7px] bg-[#605e5c]" />
    </div>
    <span className="ml-[5px] w-[28px] text-[20px] leading-[20px]">+</span>
    <span className="w-[53px] text-[15px]">74%</span>
    <div className="w-[20px] h-[15px] border-2 border-[#7a7a7a] mr-[17px]" />
    <span className="whitespace-nowrap">Update available (click to download)</span>
  </div>
);

export default function App() {
  return (
    <div className="w-[1918px] h-[1018px] overflow-hidden flex flex-col bg-[#f3f2f1] font-['Noto_Sans','Liberation_Sans',sans-serif]">
      <TopBar />
      <Tabs />
      <Ribbon />
      <div className="flex-1 flex min-h-0">
        <LeftRail />
        <div className="w-[1741px] shrink-0 flex flex-col">
          <div className="flex flex-1 min-h-0">
            <Report />
          </div>
          <PageBar />
        </div>
        <div className="w-[40px] flex flex-col bg-white shrink-0 border-l border-[#a6a6a6] -ml-[1px]">
          <div className="flex-1 flex flex-col items-center pt-[11px]">
            <ChevronsLeft size={26} strokeWidth={1} color="#333" />
            <svg width="16" height="16" viewBox="0 0 16 16" fill="none" stroke="#333" strokeWidth="1.100" className="mt-[16px] rotate-90"><path d="M1 2h14L10 8v6l-4-2V8z" /></svg>
            <div className="mt-[10px] text-[19px] leading-[24px] text-[#252423] [writing-mode:vertical-rl]">Filters</div>
          </div>
          <div className="h-[44px] bg-[#f3f2f1]" />
        </div>
        <SidePane w="w-[44px]" title="Visualizations" />
        <SidePane w="w-[42px]" title="Data" />
      </div>
      <StatusBar />
    </div>
  );
}
